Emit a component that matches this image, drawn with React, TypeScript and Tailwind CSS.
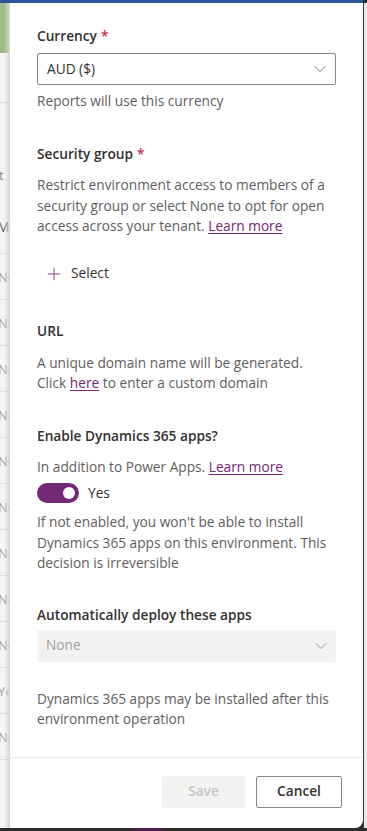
import { ChevronDown, Plus } from "lucide-react";

const rows = ["No", "No", "No", "No", "No", "No", "No", "No", "No", "Ye", "No"];

const font = { fontFamily: '"Open Sans", "Noto Sans", sans-serif' };

function Label({ text, required }: { text: string; required?: boolean }) {
  return (
    <div className="text-[13.7px] leading-[20px] font-semibold text-[#323130]">
      {text}
      {required && <span className="text-[#c4314b] ml-1">*</span>}
    </div>
  );
}

function Link({ children }: { children: React.ReactNode }) {
  return <span className="text-[#742774] underline underline-offset-2">{children}</span>;
}

export default function App() {
  return (
    <div
      className="w-[367px] h-[831px] flex flex-col bg-[#2d2c2b] overflow-hidden"
      style={font}
    >
      <div className="h-[3px] w-[363px] bg-[#2b579a] shrink-0" />

      <div className="flex flex-1 min-h-0">
        {/* page behind the panel */}
        <div className="w-[10px] shrink-0 bg-[#f5f5f5] overflow-hidden flex flex-col relative">
          <div className="h-[50px] shrink-0 bg-[#9bbd84]" />
          <div className="h-[50px] shrink-0 border-b border-[#e1dfdd]" />
          <div className="h-[47px] shrink-0" />
          <div className="h-[50px] shrink-0 text-[13px] text-[#8a8886] leading-[50px] -ml-[1px]">t</div>
          <div className="h-[54px] shrink-0 text-[14px] text-[#605e5c] leading-[54px] -ml-[3px] border-b border-[#e1dfdd]">
            M
          </div>
          {rows.map((r, i) => (
            <div
              key={i}
              className="h-[46px] shrink-0 text-[13px] text-[#a19f9d] leading-[46px] -ml-[2px] border-b border-[#e1dfdd]"
            >
              {r}
            </div>
          ))}
          <div className="absolute inset-y-0 right-0 w-[6px] bg-gradient-to-r from-transparent to-[#d6d6d6]" />
        </div>

        {/* panel */}
        <div className="w-[353px] shrink-0 bg-white rounded-br-[8px] flex flex-col">
          <div className="flex-1 pl-[27px] pr-[26px] pt-[23px] text-[13.7px]">
            <Label text="Currency" required />
            <div className="mt-[7px] h-[32px] w-[299px] border border-[#8a8886] rounded-[2px] flex items-center justify-between pl-[9px] pr-[5px]">
              <span className="text-[#323130]">AUD ($)</span>
              <ChevronDown size={20} strokeWidth={1} className="text-[#605e5c]" />
            </div>
            <div className="mt-[6px] leading-[20px] text-[#605e5c]">
              Reports will use this currency
            </div>

            <div className="mt-[33px]">
              <Label text="Security group" required />
            </div>
            <div className="mt-[11px] leading-[20.5px] text-[#605e5c]">
              Restrict environment access to members of a<br />
              security group or select None to opt for open<br />
              access across your tenant. <Link>Learn more</Link>
            </div>
            <div className="mt-[21px] h-[32px] flex items-center pl-[7px] gap-[7px]">
              <Plus size={20} strokeWidth={1} className="text-[#742774]" />
              <span className="text-[#323130]">Select</span>
            </div>

            <div className="mt-[31px]">
              <Label text="URL" />
            </div>
            <div className="mt-[12px] leading-[20px] text-[#605e5c]">
              A unique domain name will be generated.<br />
              Click <Link>here</Link> to enter a custom domain
            </div>

            <div className="mt-[33px]">
              <Label text="Enable Dynamics 365 apps?" />
            </div>
            <div className="mt-[11px] leading-[20px] text-[#605e5c]">
              In addition to Power Apps. <Link>Learn more</Link>
            </div>
            <div className="mt-[6px] flex items-center gap-[9px]">
              <div className="w-[42px] h-[20px] rounded-full bg-[#742774] flex items-center justify-end pr-[4px]">
                <div className="w-[12px] h-[12px] rounded-full bg-white" />
              </div>
              <span className="text-[#323130]">Yes</span>
            </div>
            <div className="mt-[9px] leading-[20.5px] text-[#605e5c]">
              If not enabled, you won't be able to install<br />
              Dynamics 365 apps on this environment. This<br />
              decision is irreversible
            </div>

            <div className="mt-[31px]">
              <Label text="Automatically deploy these apps" />
            </div>
            <div className="mt-[5px] h-[32px] w-[299px] bg-[#f3f2f1] rounded-[2px] flex items-center justify-between pl-[9px] pr-[5px]">
              <span className="text-[#a19f9d]">None</span>
              <ChevronDown size={20} strokeWidth={1} className="text-[#8a8886]" />
            </div>
            <div className="mt-[27px] leading-[20px] text-[#605e5c]">
              Dynamics 365 apps may be installed after this<br />
              environment operation
            </div>
          </div>

          <div className="h-[71px] shrink-0 border-t border-[#edebe9] flex items-center justify-end gap-[11px] pr-[21px] pb-[3px] text-[13.7px]">
            <div className="w-[83px] h-[32px] rounded-[2px] bg-[#f3f2f1] flex items-center justify-center font-semibold text-[#c8c6c4]">
              Save
            </div>
            <div className="w-[86px] h-[32px] rounded-[2px] border border-[#8a8886] flex items-center justify-center font-semibold text-[#323130]">
              Cancel
            </div>
          </div>
        </div>

        <div className="w-[1px] shrink-0 bg-[#3a3a3a]" />
        <div className="flex-1 bg-[#e8e8e8]" />
      </div>

      <div className="h-[3px] shrink-0 flex">
        <div className="w-[133px] bg-[#2d2c2b]" />
        <div className="w-[30px] bg-[#4b1d4b]" />
        <div className="flex-1 bg-[#2d2c2b]" />
      </div>
    </div>
  );
}
